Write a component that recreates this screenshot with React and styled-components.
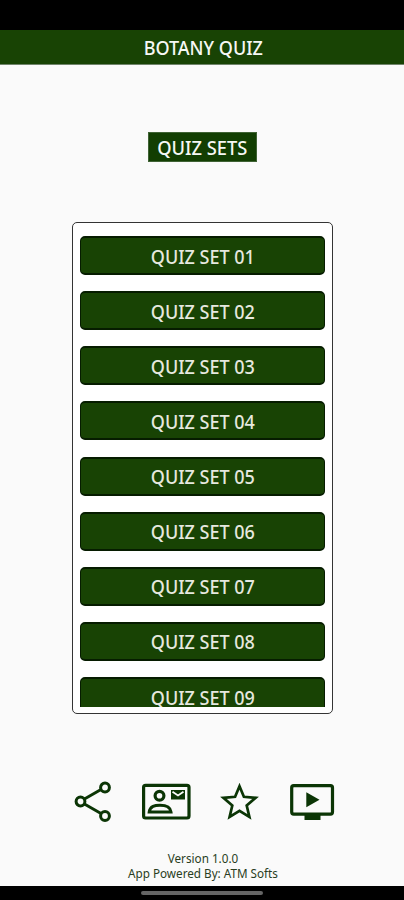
import styled, { createGlobalStyle } from 'styled-components';

const quizSets = ['01', '02', '03', '04', '05', '06', '07', '08', '09'];

const ShareIcon = () => (
    <svg width='40' height='42' viewBox='0 0 40 42' fill='none' stroke='#0b3505' strokeWidth='3'>
        <path d='M11 19.2 28 9.5M11 23.8 28 33.5' />
        <circle cx='7.5' cy='21.5' r='4.4' />
        <circle cx='32' cy='7.5' r='4.4' />
        <circle cx='32' cy='36' r='4.4' />
    </svg>
);

const ContactIcon = () => (
    <svg width='50' height='42' viewBox='0 0 50 42' fill='none' stroke='#0b3505' strokeWidth='3.2'>
        <rect x='2.6' y='5.3' width='45.4' height='32.7' rx='2' />
        <circle cx='18.5' cy='15.7' r='4.4' />
        <path d='M8.2 32C9 25.8 14 25.3 19 25.3s10.2.5 11 6.7z' strokeWidth='3' />
        <path d='M30 10h14v9.5H30z' fill='#0b3505' stroke='none' />
        <path d='m31.5 11.8 5.5 3.7 5.5-3.7' stroke='#fafafa' strokeWidth='1.8' />
    </svg>
);

const StarIcon = () => (
    <svg width='42' height='42' viewBox='0 0 42 42' fill='none' stroke='#0b3505' strokeWidth='2.7'>
        <path d='m20.5 6.2 4.4 10.6 11.7 1-8.9 7.7 2.7 11.5-9.9-6.1-9.9 6.1 2.7-11.5-8.9-7.7 11.7-1z' />
    </svg>
);

const VideoIcon = () => (
    <svg width='46' height='42' viewBox='0 0 46 42' fill='none' stroke='#0b3505' strokeWidth='3.2'>
        <rect x='2.7' y='5.7' width='40.8' height='28.4' rx='2' />
        <path d='M15.5 34h16v6h-16zM17.3 12.3v15L30.5 19.8z' fill='#0b3505' stroke='none' />
    </svg>
);

export default function App() {
    return (
        <>
            <GlobalStyle />
            <Screen>
                <StatusBar />
                <Header>
                    <HeaderTitle>BOTANY QUIZ</HeaderTitle>
                </Header>
                <Content>
                    <SectionTitle>
                        <SectionText>QUIZ SETS</SectionText>
                    </SectionTitle>
                    <ListFrame>
                        <QuizList>
                            {quizSets.map((number) => (
                                <QuizButton key={number}>
                                    <ButtonText>QUIZ SET {number}</ButtonText>
                                </QuizButton>
                            ))}
                        </QuizList>
                    </ListFrame>
                    <Actions>
                        <Action aria-label='Share'><ShareIcon /></Action>
                        <Action aria-label='Contact'><ContactIcon /></Action>
                        <Action aria-label='Rate'><StarIcon /></Action>
                        <Action aria-label='Videos'><VideoIcon /></Action>
                    </Actions>
                    <Footer>
                        <FooterLine>Version 1.0.0</FooterLine>
                        <FooterLine>App Powered By: ATM Softs</FooterLine>
                    </Footer>
                </Content>
                <NavigationBar>
                    <HomeHandle />
                </NavigationBar>
            </Screen>
        </>
    );
}

const GlobalStyle = createGlobalStyle`
    body {
        margin: 0;
        overflow: hidden;
    }

    * {
        box-sizing: border-box;
    }
`;

const Screen = styled.div`
    width: 404px;
    height: 900px;
    display: flex;
    flex-direction: column;
    background-color: #fafafa;
    font-family: 'Noto Sans', sans-serif;
`;

const StatusBar = styled.div`
    height: 30px;
    flex-shrink: 0;
    background-color: #000000;
`;

const Header = styled.header`
    height: 35px;
    flex-shrink: 0;
    display: flex;
    align-items: center;
    justify-content: center;
    padding-top: 2px;
    background-color: #184304;
    border-bottom: 1px solid #70846b;
`;

const Label = styled.span`
    display: block;
    flex-shrink: 0;
    line-height: 24px;
    white-space: nowrap;
`;

const HeaderTitle = styled(Label)`
    color: #f6f8f5;
    font-size: 20px;
    font-weight: 500;
    transform: translateX(1px) scaleX(0.9);
`;

const Content = styled.main`
    flex: 1;
    min-height: 0;
    display: flex;
    flex-direction: column;
    align-items: center;
`;

const SectionTitle = styled.div`
    width: 109px;
    height: 30px;
    margin-top: 67px;
    margin-left: 1px;
    flex-shrink: 0;
    display: flex;
    align-items: center;
    justify-content: center;
    padding-top: 2px;
    background-color: #123e02;
    border: 1px solid #3f6234;
`;

const SectionText = styled(Label)`
    color: #f6f8f5;
    font-size: 20px;
    font-weight: 500;
    transform: scaleX(0.915);
`;

const ListFrame = styled.section`
    width: 261px;
    height: 492px;
    margin-top: 60px;
    margin-left: 1px;
    flex-shrink: 0;
    padding: 13px 7px 6px;
    border: 1.5px solid #343434;
    border-radius: 5px;
    background-color: #ffffff;
`;

const QuizList = styled.div`
    height: 100%;
    overflow: hidden;
    display: flex;
    flex-direction: column;
    gap: 16.15px;
`;

const QuizButton = styled.button`
    width: 100%;
    height: 39px;
    flex-shrink: 0;
    display: flex;
    align-items: center;
    justify-content: center;
    padding: 2px 0 0;
    border: solid #061c00;
    border-width: 2px 1px;
    border-radius: 5px;
    background-color: #184304;
    color: #e6e8df;
    font-family: inherit;
`;

const ButtonText = styled(Label)`
    font-size: 20px;
    font-weight: 500;
    transform: scaleX(0.9);
`;

const Actions = styled.nav`
    width: 262px;
    height: 42px;
    margin-top: 66px;
    margin-left: 4px;
    flex-shrink: 0;
    display: flex;
    justify-content: space-between;
`;

const Action = styled.button`
    display: block;
    padding: 0;
    border: 0;
    background: none;
    line-height: 0;
`;

const Footer = styled.footer`
    margin-top: 29px;
    margin-left: 2px;
    display: flex;
    flex-direction: column;
    align-items: center;
`;

const FooterLine = styled.div`
    color: #293d22;
    font-size: 11.7px;
    line-height: 15px;
    white-space: nowrap;
`;

const NavigationBar = styled.div`
    height: 14px;
    flex-shrink: 0;
    padding-top: 5px;
    background-color: #000000;
`;

const HomeHandle = styled.div`
    width: 122px;
    height: 4px;
    margin: 0 auto;
    border-radius: 2px;
    background-color: #656565;
`;
